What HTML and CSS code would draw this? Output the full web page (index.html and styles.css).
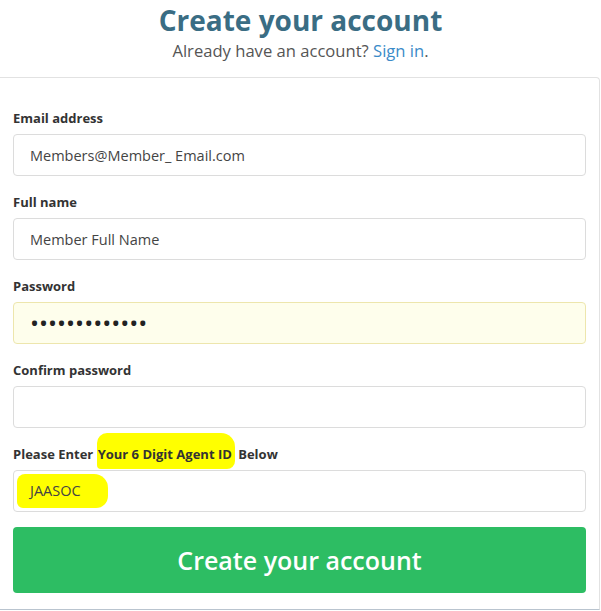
FILE: index.html
```html
<!DOCTYPE html>
<html lang="en">
<head>
<meta charset="utf-8">
<title>Create your account</title>
<link rel="stylesheet" href="styles.css">
</head>
<body>
<header class="head">
  <h1 class="title">Create your account</h1>
  <p class="sub">Already have an account? <a class="link" href="#">Sign in</a>.</p>
</header>
<form class="card">
  <div class="group">
    <label class="label">Email address</label>
    <div class="field">Members@Member_ Email.com</div>
  </div>
  <div class="group">
    <label class="label">Full name</label>
    <div class="field">Member Full Name</div>
  </div>
  <div class="group">
    <label class="label">Password</label>
    <div class="field field-auto"><span class="dots">•••••••••••••</span></div>
  </div>
  <div class="group">
    <label class="label">Confirm password</label>
    <div class="field"></div>
  </div>
  <div class="group">
    <label class="label">Please Enter <span class="mark mark-label">Your 6 Digit Agent ID</span> Below</label>
    <div class="field"><span class="mark mark-value">JAASOC</span></div>
  </div>
  <button class="btn" type="button">Create your account</button>
</form>
</body>
</html>
```
FILE: styles.css
```css
html, body {
  margin: 0;
  padding: 0;
  background: #ffffff;
}
body {
  font-family: "Open Sans", "Noto Sans", "Liberation Sans", sans-serif;
  width: 601px;
  height: 611px;
  overflow: hidden;
}
.head {
  text-align: center;
  height: 77px;
}
.title {
  margin: 0;
  padding-top: 2px;
  font-size: 28px;
  line-height: 36px;
  font-weight: 700;
  color: #3a6d84;
}
.sub {
  margin: 2px 0 0;
  font-size: 16.6px;
  line-height: 22px;
  color: #555555;
}
.link {
  color: #3b8bc8;
  text-decoration: none;
}
.card {
  box-sizing: border-box;
  width: 600px;
  height: 533px;
  border: 1px solid #e2e2e2;
  border-left: none;
  border-bottom-color: #b9c4cf;
  border-top-right-radius: 4px;
  padding: 32px 13px 0 13px;
  display: flex;
  flex-direction: column;
  gap: 18px;
}
.group {
  display: flex;
  flex-direction: column;
  gap: 8px;
}
.label {
  font-size: 13px;
  line-height: 16px;
  font-weight: 700;
  color: #333333;
}
.field {
  box-sizing: border-box;
  height: 42px;
  border: 1px solid #dcdcdc;
  border-radius: 4px;
  padding: 0 16px;
  display: flex;
  align-items: center;
  font-size: 14.5px;
  color: #444444;
}
.field-auto {
  background: #fefeec;
  border-color: #ede6ad;
}
.dots {
  font-size: 24px;
  line-height: 20px;
  color: #222222;
}
.mark {
  background: #ffff00;
}
.mark-label {
  padding: 12px 3px 6px 1px;
  border-radius: 10px 14px 8px 4px;
}
.mark-value {
  margin-left: -13px;
  padding: 7px 27px 8px 13px;
  border-radius: 8px 14px 12px 6px;
}
.btn {
  margin-top: -3px;
  height: 66px;
  border: none;
  border-radius: 4px;
  background: #2dbd63;
  color: #ffffff;
  font-family: inherit;
  font-size: 25px;
  font-weight: 600;
  cursor: pointer;
}
```
